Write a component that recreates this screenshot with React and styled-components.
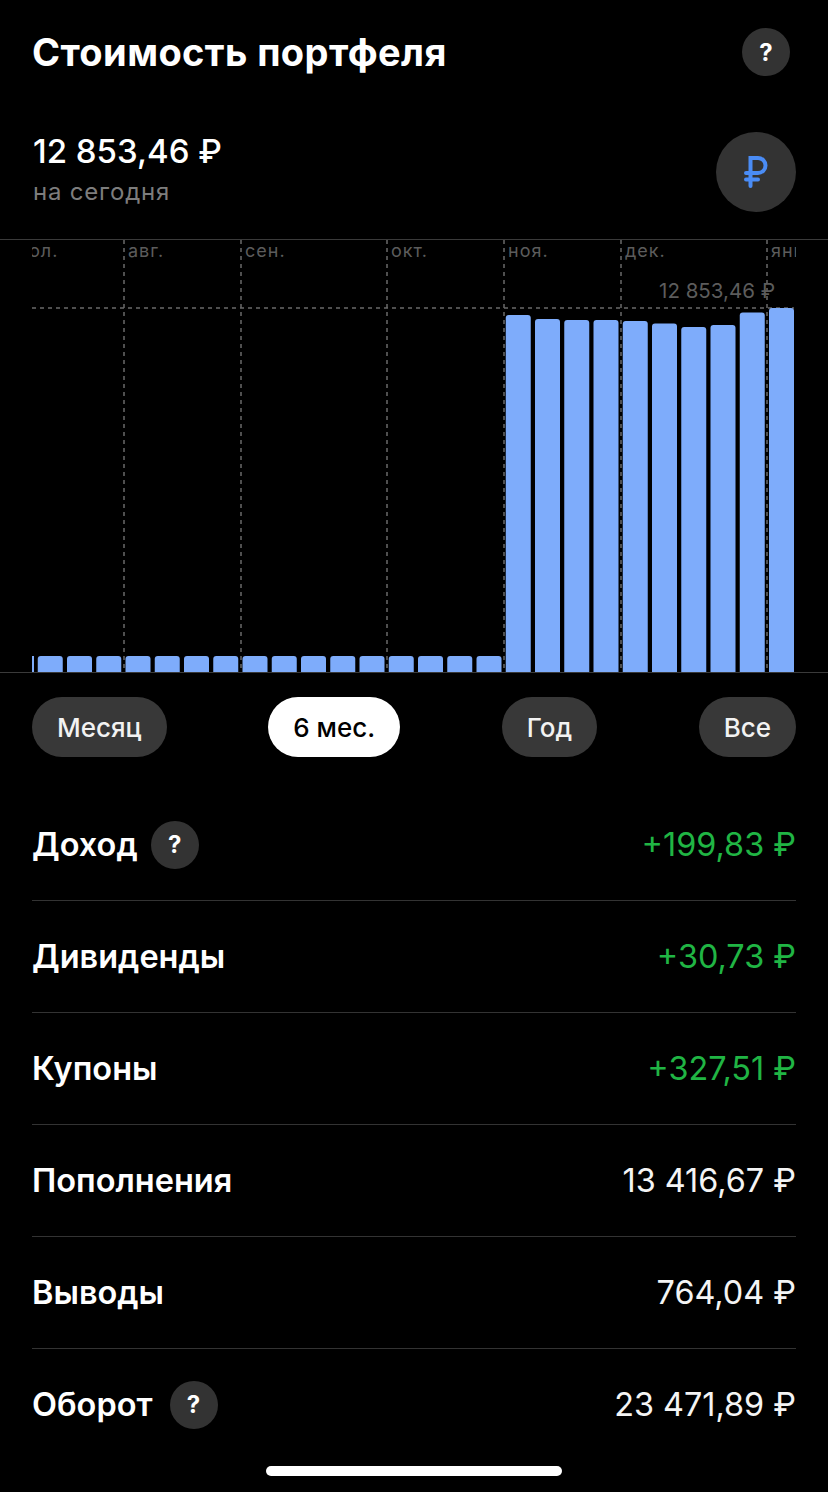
import React from "react";
import styled, { createGlobalStyle } from "styled-components";

const FONT = `Inter, "Noto Sans", "Liberation Sans", sans-serif`;

const tops = [
  656, 656, 656, 656, 656, 656, 656, 656, 656, 656, 656, 656, 656, 656, 656, 656,
  315, 319, 320, 320, 321, 323.5, 327, 325, 312.5, 308,
];
const months = [
  { x: 124, label: "авг." },
  { x: 241, label: "сен." },
  { x: 387, label: "окт." },
  { x: 504, label: "ноя." },
  { x: 621, label: "дек." },
  { x: 767, label: "янв." },
];
const periods = ["Месяц", "6 мес.", "Год", "Все"];
const rows = [
  { name: "Доход", value: "+199,83 ₽", green: true, helpGap: 13 },
  { name: "Дивиденды", value: "+30,73 ₽", green: true },
  { name: "Купоны", value: "+327,51 ₽", green: true },
  { name: "Пополнения", value: "13 416,67 ₽" },
  { name: "Выводы", value: "764,04 ₽" },
  { name: "Оборот", value: "23 471,89 ₽", helpGap: 17 },
];

const Chart = () => (
  <ChartWrap>
    <ChartSvg viewBox="0 240 828 432" width="828" height="432">
      <defs>
        <clipPath id="labels">
          <rect x="32" y="240" width="764" height="432" />
        </clipPath>
      </defs>
      <g stroke="#6a6a6a" strokeWidth="1.5" strokeDasharray="4 4">
        {months.map((m) => (
          <line key={m.x} x1={m.x} x2={m.x} y1="240" y2="672" />
        ))}
        <line x1="32" x2="794" y1="308" y2="308" />
      </g>
      <g clipPath="url(#labels)" fill="#5c5c5c" fontSize="18" letterSpacing="1">
        <text x="13" y="257">июл.</text>
        {months.map((m) => (
          <text key={m.x} x={m.x + 4} y="257">
            {m.label}
          </text>
        ))}
      </g>
      <text x="775" y="298" textAnchor="end" fill="#5c5c5c" fontSize="20.5">
        12 853,46 ₽
      </text>
      <rect x="32" y="656" width="2" height="16" fill="#7eacfb" />
      {tops.map((top, i) => (
        <path
          key={i}
          fill="#7eacfb"
          d={`M${37.75 + i * 29.25} 672V${top + 3}q0-3 3-3h19q3 0 3 3V672z`}
        />
      ))}
    </ChartSvg>
  </ChartWrap>
);

const App = () => {
  return (
    <Page>
      <GlobalStyle />
      <Header>
        <Title>Стоимость портфеля</Title>
        <HelpButton>?</HelpButton>
      </Header>
      <Balance>
        <div>
          <Amount>12 853,46 ₽</Amount>
          <Caption>на сегодня</Caption>
        </div>
        <CurrencyBadge>
          <svg
            width="30"
            height="36"
            viewBox="0 0 30 36"
            fill="none"
            stroke="#4a8cf5"
            strokeWidth="4"
            strokeLinecap="round"
          >
            <path d="M9.5 32V4H17a7.5 7.5 0 0 1 0 15H5" />
            <path d="M5 25.5h12" />
          </svg>
        </CurrencyBadge>
      </Balance>
      <Chart />
      <Periods>
        {periods.map((p) => (
          <Period key={p} active={p === "6 мес."}>
            {p}
          </Period>
        ))}
      </Periods>
      <List>
        {rows.map((r) => (
          <Row key={r.name}>
            <RowName gap={r.helpGap}>
              {r.name}
              {r.helpGap && <HelpButton>?</HelpButton>}
            </RowName>
            <RowValue green={r.green}>{r.value}</RowValue>
          </Row>
        ))}
      </List>
      <HomeBar />
    </Page>
  );
};

const GlobalStyle = createGlobalStyle`
  html, body {
    margin: 0;
    background: #000;
  }
`;
const Page = styled.div`
  width: 828px;
  height: 1492px;
  overflow: hidden;
  background: #000;
  color: #fff;
  font-family: ${FONT};
  box-sizing: border-box;
  position: relative;
`;
const Header = styled.header`
  display: flex;
  justify-content: space-between;
  align-items: center;
  height: 48px;
  padding: 28px 38px 0 32px;
`;
const Title = styled.h1`
  margin: 0;
  font-size: 38px;
  font-weight: 700;
  letter-spacing: 0.4px;
`;
const HelpButton = styled.span`
  display: inline-flex;
  align-items: center;
  justify-content: center;
  width: 48px;
  height: 48px;
  border-radius: 50%;
  background: #333;
  color: #fff;
  font-size: 24px;
  font-weight: 700;
`;
const Balance = styled.section`
  display: flex;
  justify-content: space-between;
  align-items: center;
  height: 80px;
  padding: 56px 32px 27px 33px;
`;
const Amount = styled.div`
  font-size: 33px;
  font-weight: 500;
  line-height: 40px;
  margin-top: -6px;
`;
const Caption = styled.div`
  margin-top: 6px;
  font-size: 24px;
  line-height: 30px;
  letter-spacing: 0.8px;
  color: #7d7d7d;
`;
const CurrencyBadge = styled.div`
  display: flex;
  align-items: center;
  justify-content: center;
  width: 80px;
  height: 80px;
  border-radius: 50%;
  background: #333;
`;
const ChartWrap = styled.div`
  border-top: 1px solid #3a3a3a;
  border-bottom: 1px solid #3a3a3a;
`;
const ChartSvg = styled.svg`
  display: block;
  font-family: ${FONT};
`;
const Periods = styled.div`
  display: flex;
  justify-content: space-between;
  padding: 24px 32px 0;
`;
const Period = styled.div`
  display: flex;
  align-items: center;
  height: 60px;
  padding: 0 25px;
  border-radius: 30px;
  font-size: 26px;
  font-weight: 500;
  background: ${(props) => (props.active ? "#fff" : "#383838")};
  color: ${(props) => (props.active ? "#000" : "#f2f2f2")};
`;
const List = styled.div`
  margin: 32px 32px 0;
`;
const Row = styled.div`
  display: flex;
  justify-content: space-between;
  align-items: center;
  height: 111px;
  & + & {
    border-top: 1px solid #333;
  }
`;
const RowName = styled.div`
  display: flex;
  align-items: center;
  gap: ${(props) => props.gap || 0}px;
  font-size: 32.5px;
  font-weight: 600;
`;
const RowValue = styled.div`
  font-size: 32.4px;
  font-weight: 400;
  color: ${(props) => (props.green ? "#20b544" : "#f4f4f4")};
`;
const HomeBar = styled.div`
  position: absolute;
  left: 266px;
  bottom: 16px;
  width: 296px;
  height: 10px;
  border-radius: 5px;
  background: #fff;
`;

export default App;
